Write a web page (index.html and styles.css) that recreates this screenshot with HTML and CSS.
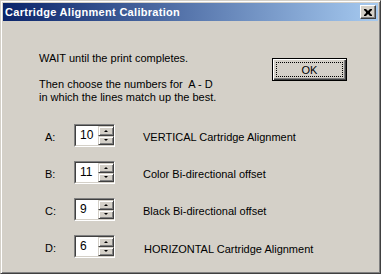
FILE: index.html
```html
<!DOCTYPE html>
<html lang="en">
<head>
  <meta charset="UTF-8">
  <title>Cartridge Alignment Calibration</title>
  <link rel="stylesheet" href="styles.css">
</head>
<body>
  <div class="window">
    <div class="titlebar">
      <span class="title">Cartridge Alignment Calibration</span>
      <button class="close-btn">
        <svg width="8" height="7" viewBox="0 0 8 7"><path d="M0 0h2l2 2 2-2h2v1l-2 2v1l2 2v1h-2l-2-2-2 2h-2v-1l2-2v-1l-2-2z" fill="#000"/></svg>
      </button>
    </div>

    <div class="content">
      <div class="top">
        <div class="intro">
          <p>WAIT until the print completes.</p>
          <p>Then choose the numbers for&nbsp; A - D<br>in which the lines match up the best.</p>
        </div>
        <button class="ok-btn"><span class="focus">OK</span></button>
      </div>

      <div class="rows">
        <div class="row">
          <span class="lbl">A:</span>
          <div class="spin"><div class="val">10</div><div class="arrows"><div class="arr up"></div><div class="arr down"></div></div></div>
          <span class="desc">VERTICAL Cartridge Alignment</span>
        </div>
        <div class="row">
          <span class="lbl">B:</span>
          <div class="spin"><div class="val">11</div><div class="arrows"><div class="arr up"></div><div class="arr down"></div></div></div>
          <span class="desc">Color Bi-directional offset</span>
        </div>
        <div class="row">
          <span class="lbl">C:</span>
          <div class="spin"><div class="val">9</div><div class="arrows"><div class="arr up"></div><div class="arr down"></div></div></div>
          <span class="desc">Black Bi-directional offset</span>
        </div>
        <div class="row">
          <span class="lbl">D:</span>
          <div class="spin"><div class="val">6</div><div class="arrows"><div class="arr up"></div><div class="arr down"></div></div></div>
          <span class="desc wide">HORIZONTAL Cartridge Alignment</span>
        </div>
      </div>
    </div>
  </div>
</body>
</html>
```

FILE: styles.css
```css
body {
  margin: 0;
  background: #d4d0c8;
  font-family: 'Liberation Sans', Arial, sans-serif;
  font-size: 11px;
  color: #000;
}
.window {
  width: 381px;
  height: 274px;
  box-sizing: border-box;
  background: #d4d0c8;
  border: 1px solid;
  border-color: #d4d0c8 #404040 #404040 #d4d0c8;
  box-shadow: inset 1px 1px #fff, inset -1px -1px #808080;
  padding: 2px;
}
.titlebar {
  height: 18px;
  display: flex;
  align-items: center;
  justify-content: space-between;
  padding: 0 2px 0 2px;
  background: linear-gradient(to right, #0a246a, #a6caf0);
}
.title {
  color: #fff;
  font-family: 'Liberation Sans', Arial, sans-serif;
  font-weight: bold;
  font-size: 11px;
  letter-spacing: 0.3px;
}
.close-btn {
  width: 16px;
  height: 14px;
  padding: 0;
  margin: 0;
  display: flex;
  align-items: center;
  justify-content: center;
  background: #d4d0c8;
  border: 1px solid;
  border-color: #fff #404040 #404040 #fff;
  box-shadow: inset -1px -1px #808080;
}
.content {
  padding: 31px 0 0 36px;
}
.top {
  display: flex;
  justify-content: space-between;
  align-items: flex-start;
  padding-right: 31px;
}
.intro p {
  margin: 0 0 13px;
  line-height: 13px;
}
.ok-btn {
  width: 75px;
  height: 23px;
  margin-top: 6px;
  padding: 3px;
  background: #d4d0c8;
  border: 1px solid #000;
  box-shadow: inset 1px 1px #fff, inset -1px -1px #404040, inset -2px -2px #808080;
  font-family: inherit;
  font-size: 11px;
}
.focus {
  display: block;
  height: 15px;
  line-height: 15px;
  border: 1px dotted #000;
  box-sizing: border-box;
}
.rows {
  display: flex;
  flex-direction: column;
  gap: 14px;
  margin-top: 7px;
}
.row {
  display: flex;
  align-items: center;
  height: 23px;
}
.lbl {
  width: 35px;
  padding-left: 6px;
  box-sizing: border-box;
  margin-top: 2px;
}
.spin {
  display: flex;
  height: 23px;
  width: 41px;
  box-sizing: border-box;
  border: 1px solid;
  border-color: #808080 #fff #fff #808080;
}
.val {
  flex: 1;
  background: #fff;
  border: 1px solid;
  border-color: #404040 #d4d0c8 #d4d0c8 #404040;
  border-right: none;
  padding: 3px 0 0 4px;
  font-size: 12px;
  line-height: 13px;
}
.arrows {
  width: 16px;
  display: flex;
  flex-direction: column;
  background: #fff;
  border-top: 1px solid #404040;
  border-bottom: 1px solid #d4d0c8;
}
.arr {
  flex: 1;
  background: #d4d0c8;
  border: 1px solid;
  border-color: #d4d0c8 #404040 #404040 #d4d0c8;
  box-shadow: inset 1px 1px #fff, inset -1px -1px #808080;
  display: flex;
  align-items: center;
  justify-content: center;
}
.arr::after {
  content: '';
  width: 0;
  height: 0;
  border-left: 2px solid transparent;
  border-right: 2px solid transparent;
}
.up::after {
  border-bottom: 2px solid #000;
}
.down::after {
  border-top: 2px solid #000;
}
.desc {
  margin-left: 28px;
  margin-top: 2px;
}
.desc.wide {
  margin-left: 29px;
  margin-top: 4px;
}
```
